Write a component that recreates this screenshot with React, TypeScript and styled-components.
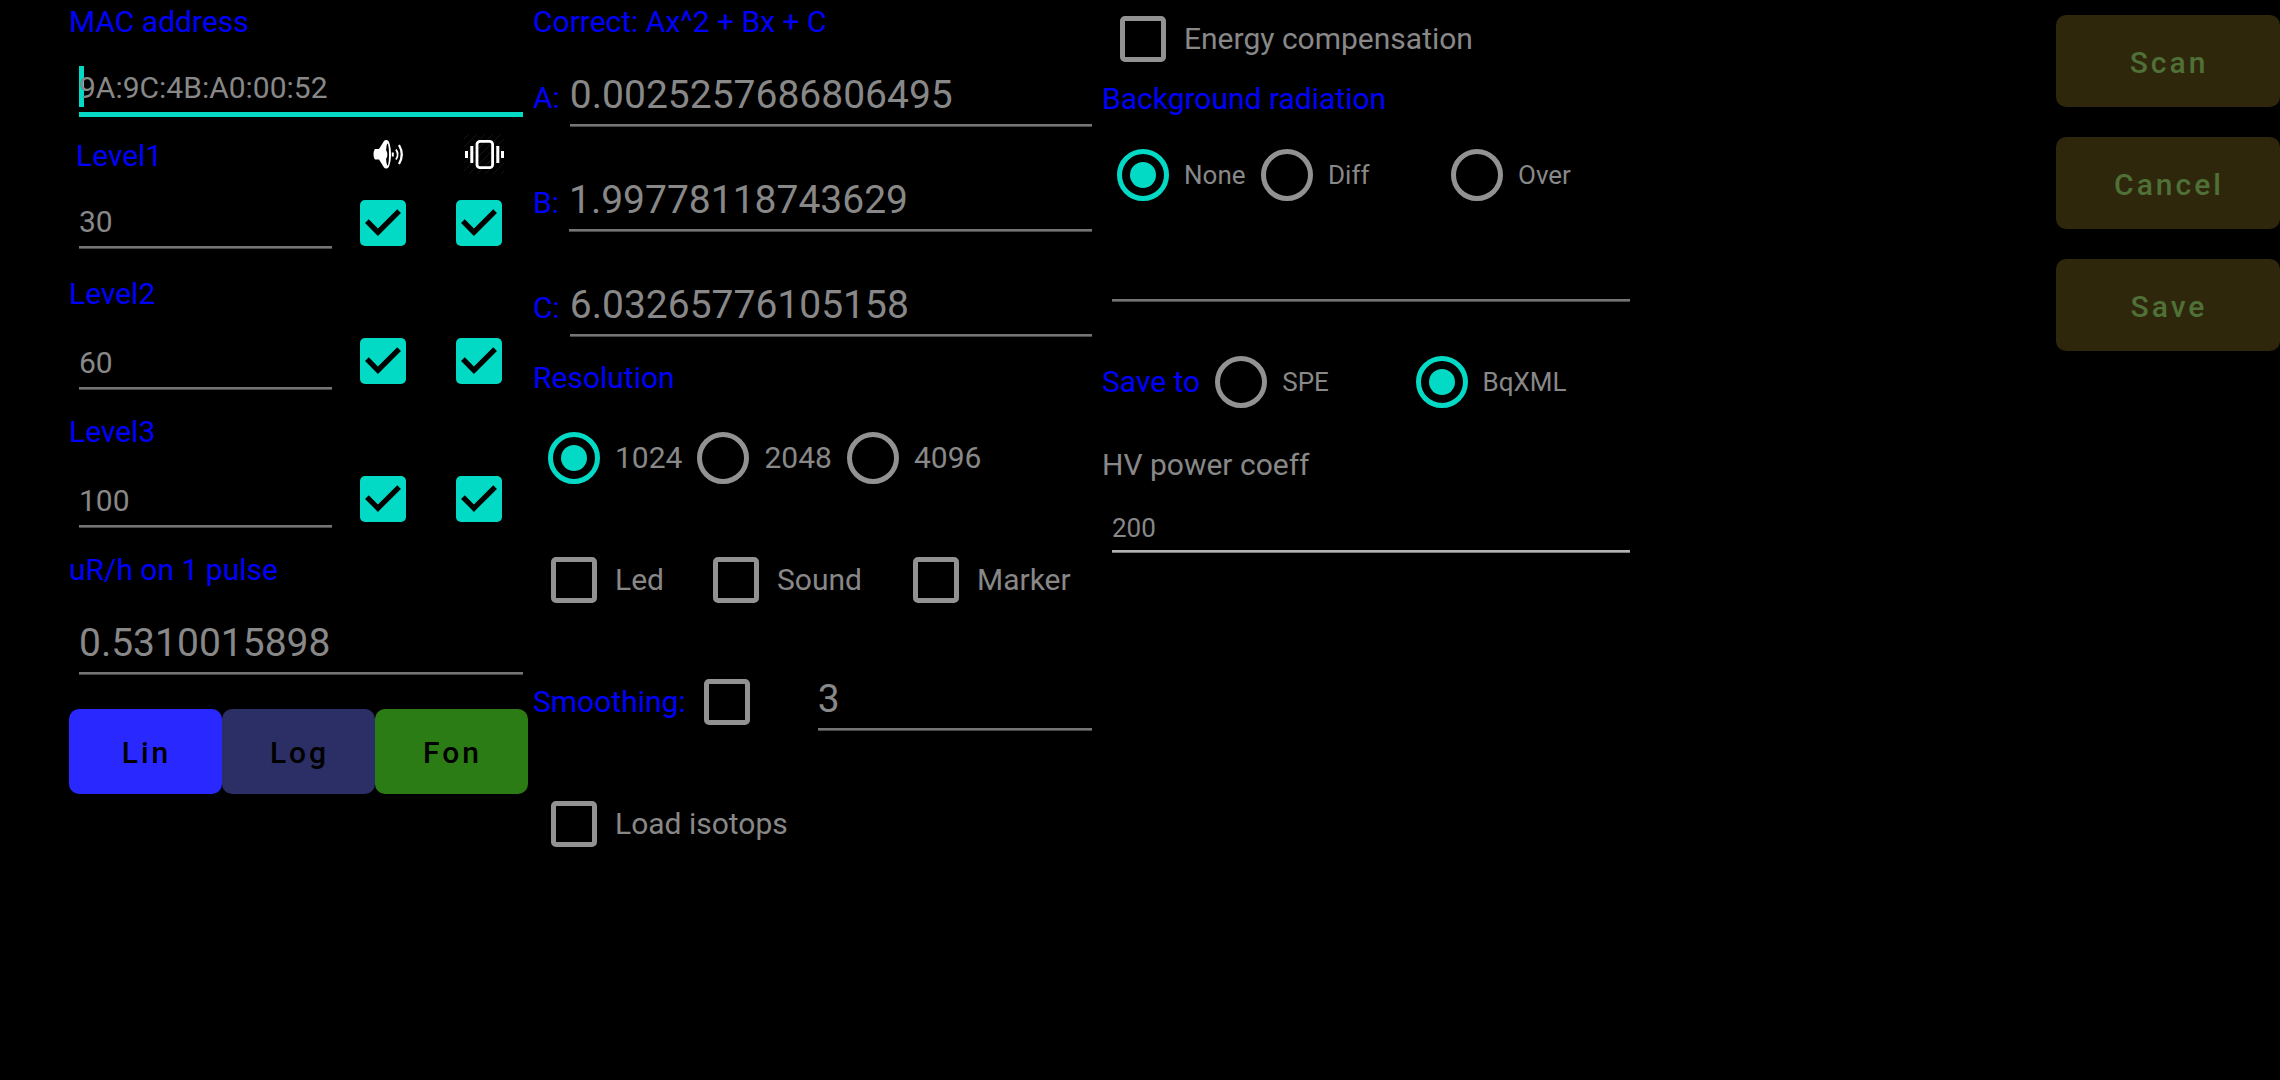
import React from "react";
import styled, { createGlobalStyle, css } from "styled-components";

const accent = "#03dac5";
const blue = "#0000ff";
const grey = "#888888";

const GlobalStyle = createGlobalStyle`
  * { box-sizing: border-box; }
  body {
    margin: 0;
    background: #000;
    color: ${grey};
    font-family: Roboto, sans-serif;
    font-size: 30px;
  }
`;

const Screen = styled.main`
  display: grid;
  grid-template-columns: 464fr 569fr 538fr 640fr;
  align-items: start;
  min-height: 100vh;
  padding-left: 69px;
  overflow: hidden;
`;

const Column = styled.section`
  display: flex;
  flex-direction: column;
  min-width: 0;
`;

const captionStyle = css<{ $plain?: boolean }>`
  padding-top: 3px;
  line-height: 38px;
  color: ${(p) => (p.$plain ? grey : blue)};
  white-space: nowrap;
`;

const Caption = styled.label<{ $plain?: boolean }>`
  ${captionStyle}
`;

const Heading = styled.div`
  ${captionStyle}
`;

const fieldSizes = {
  small: { font: 26, line: 44 },
  medium: { font: 30, line: 50 },
  large: { font: 39, line: 58 },
};

const Field = styled.input<{
  $size: keyof typeof fieldSizes;
  $top: number;
  $active?: boolean;
  $bright?: boolean;
}>`
  flex: 1;
  min-width: 0;
  margin: 0 10px;
  padding: ${(p) => p.$top}px 0 0;
  border: 0;
  border-bottom: ${(p) => (p.$active ? 5 : 2)}px solid
    ${(p) => (p.$active ? accent : p.$bright ? "#b4b4b4" : "#757575")};
  box-shadow: ${(p) =>
    p.$active ? "none" : p.$bright ? "0 1px #7c7c7c" : "0 1px #484848"};
  border-radius: 0;
  outline: none;
  background: ${(p) =>
    p.$active
      ? `linear-gradient(${accent}, ${accent}) 0 25px / 5px 41px no-repeat`
      : "transparent"};
  color: ${grey};
  caret-color: ${accent};
  font-family: inherit;
  font-size: ${(p) => fieldSizes[p.$size].font}px;
  line-height: ${(p) => fieldSizes[p.$size].line}px;
  height: ${(p) =>
    p.$top + fieldSizes[p.$size].line + (p.$active ? 5 : 2)}px;
`;

const FieldRow = styled.div<{ $height: number }>`
  display: flex;
  align-items: baseline;
  min-height: ${(p) => p.$height}px;
`;

const LevelGrid = styled.div`
  display: grid;
  grid-template-columns: 273fr 96fr 95fr;
`;

const LevelHead = styled(LevelGrid)`
  ${Caption} {
    padding-left: 7px;
  }
  svg {
    display: block;
    width: 40px;
    height: 40px;
    margin-left: 26px;
  }
`;

const LevelRow = styled(LevelGrid)`
  align-items: start;
  height: 97px;
`;

const TickCell = styled.div`
  display: flex;
  align-items: center;
  height: 96px;
`;

const Tick = styled.input.attrs({ type: "checkbox" })`
  appearance: none;
  flex: none;
  width: 46px;
  height: 46px;
  margin: 0 18px;
  border: 5px solid #929292;
  border-radius: 5px;

  &:checked {
    border: 0;
    background: ${accent};
  }
  &:checked::after {
    content: "";
    display: block;
    height: 100%;
    background: #000;
    clip-path: polygon(11% 50%, 19% 42%, 39% 62%, 81% 20%, 89% 28%, 39% 78%);
  }
`;

const Radio = styled.input.attrs({ type: "radio" })`
  appearance: none;
  display: grid;
  place-items: center;
  flex: none;
  width: 52px;
  height: 52px;
  margin: 0 15px;
  border: 5px solid #929292;
  border-radius: 50%;

  &:checked {
    border-color: ${accent};
  }
  &:checked::after {
    content: "";
    width: 26px;
    height: 26px;
    border-radius: 50%;
    background: ${accent};
  }
`;

const Choice = styled.label<{ $small?: boolean }>`
  display: flex;
  align-items: center;
  font-size: ${(p) => (p.$small ? 26 : 30)}px;
  line-height: 38px;
  white-space: nowrap;
`;

const Row = styled.div<{ $height: number; $columns?: string }>`
  display: ${(p) => (p.$columns ? "grid" : "flex")};
  grid-template-columns: ${(p) => p.$columns};
  align-items: center;
  height: ${(p) => p.$height}px;

  > ${Caption}, > ${Heading} {
    padding-bottom: 3px;
  }
`;

const SmoothingField = styled.div`
  display: flex;
  align-self: start;
  min-width: 0;
`;

const ModeBar = styled.div`
  display: grid;
  grid-template-columns: repeat(3, 1fr);
  padding: 15px 5px 15px 0;
`;

const Button = styled.button<{ $bg: string; $fg?: string; $tall?: boolean }>`
  height: ${(p) => (p.$tall ? 92 : 85)}px;
  padding: 2px 0 0 2px;
  border: 0;
  border-radius: 10px;
  background: ${(p) => p.$bg};
  color: ${(p) => p.$fg ?? "#000"};
  font-family: inherit;
  font-size: 30px;
  font-weight: 500;
  letter-spacing: 3px;
`;

const Actions = styled.nav`
  display: flex;
  flex-direction: column;
  justify-self: end;
  gap: 30px;
  width: 224px;
  padding-top: 15px;
`;

const SpeakerIcon = () => (
  <svg viewBox="0 0 40 40" fill="none" aria-hidden="true">
    <path
      d="M7 15h4l5-8c1-1.500 4-1.500 5 1 1.500 4 2 8 2 12.500s-.5 8-2 12c-1 2.500-4 2.500-5 1l-5-8H7c-2-2-2-8.500 0-10.500z"
      fill="#fff"
    />
    <ellipse cx="19.500" cy="20.500" rx="1.500" ry="11" fill="#000" />
    <path d="M17.500 16c2.500 1 2.500 8 0 9z" fill="#fff" />
    <path d="M24.800 18.500v4" stroke="#fff" strokeWidth="2" />
    <path d="M28 15.500c2 3 2 7 0 10" stroke="#fff" strokeWidth="1.800" />
    <path d="M31 11c3.500 6 3.500 13 0 19" stroke="#fff" strokeWidth="2.200" />
  </svg>
);

const VibrateIcon = () => (
  <svg viewBox="0 0 40 40" fill="none" aria-hidden="true">
    <path
      d="M0 5 5 0M0 13 13 0M0 21 21 0M0 29 29 0M0 37 37 0M5 40 40 5M13 40 40 13M21 40 40 21M29 40 40 29M37 40 40 37"
      stroke="#141414"
    />
    <rect x="13" y="7.300" width="15.600" height="26.400" rx="3" stroke="#fff" strokeWidth="2.800" />
    <path d="M7.800 12v17M33.800 12v17" stroke="#fff" strokeWidth="3" />
    <path d="M2.500 17v7M38.500 17v7" stroke="#fff" strokeWidth="3" />
  </svg>
);

const levels = [
  { id: 1, value: "30", top: 21 },
  { id: 2, value: "60", top: 24 },
  { id: 3, value: "100", top: 24 },
];

const coefficients = [
  { name: "A", value: "0.0025257686806495" },
  { name: "B", value: "1.99778118743629" },
  { name: "C", value: "6.03265776105158" },
];

export default function App() {
  return (
    <>
      <GlobalStyle />
      <Screen>
        <Column>
          <Caption htmlFor="mac">MAC address</Caption>
          <FieldRow $height={93}>
            <Field id="mac" $size="medium" $top={21} $active defaultValue="9A:9C:4B:A0:00:52" />
          </FieldRow>
          {levels.map((level) => (
            <React.Fragment key={level.id}>
              {level.id === 1 ? (
                <LevelHead>
                  <Caption htmlFor="level1">Level1</Caption>
                  <SpeakerIcon />
                  <VibrateIcon />
                </LevelHead>
              ) : (
                <Caption htmlFor={`level${level.id}`}>Level{level.id}</Caption>
              )}
              <LevelRow>
                <Field
                  id={`level${level.id}`}
                  $size="medium"
                  $top={level.top}
                  defaultValue={level.value}
                />
                <TickCell>
                  <Tick aria-label={`Level${level.id} sound`} defaultChecked />
                </TickCell>
                <TickCell>
                  <Tick aria-label={`Level${level.id} vibration`} defaultChecked />
                </TickCell>
              </LevelRow>
            </React.Fragment>
          ))}
          <Caption htmlFor="pulse">uR/h on 1 pulse</Caption>
          <FieldRow $height={105}>
            <Field id="pulse" $size="large" $top={25} defaultValue="0.5310015898" />
          </FieldRow>
          <ModeBar>
            <Button $bg="#2929ff">Lin</Button>
            <Button $bg="#2b2f66">Log</Button>
            <Button $bg="#2c7c15">Fon</Button>
          </ModeBar>
        </Column>

        <Column>
          <Heading>Correct: Ax^2 + Bx + C</Heading>
          {coefficients.map((c) => (
            <FieldRow key={c.name} $height={105}>
              <Caption htmlFor={`coef${c.name}`}>{c.name}:</Caption>
              <Field id={`coef${c.name}`} $size="large" $top={25} defaultValue={c.value} />
            </FieldRow>
          ))}
          <Heading>Resolution</Heading>
          <Row $height={122}>
            {["1024", "2048", "4096"].map((r) => (
              <Choice key={r}>
                <Radio name="resolution" defaultChecked={r === "1024"} />
                {r}
              </Choice>
            ))}
          </Row>
          <Row $height={122} $columns="162fr 200fr 207fr">
            {["Led", "Sound", "Marker"].map((name) => (
              <Choice key={name}>
                <Tick />
                {name}
              </Choice>
            ))}
          </Row>
          <Row $height={122} $columns="auto 122fr 294fr">
            <Caption htmlFor="smoothing">Smoothing:</Caption>
            <Tick id="smoothing" />
            <SmoothingField>
              <Field $size="large" $top={29} aria-label="Smoothing window" defaultValue="3" />
            </SmoothingField>
          </Row>
          <Row $height={122}>
            <Choice>
              <Tick />
              Load isotops
            </Choice>
          </Row>
        </Column>

        <Column>
          <Row $height={77}>
            <Choice>
              <Tick />
              Energy compensation
            </Choice>
          </Row>
          <Heading>Background radiation</Heading>
          <Row $height={114} $columns="144fr 190fr 204fr">
            {["None", "Diff", "Over"].map((name) => (
              <Choice key={name} $small>
                <Radio name="background" defaultChecked={name === "None"} />
                {name}
              </Choice>
            ))}
          </Row>
          <FieldRow $height={89}>
            <Field $size="small" $top={23} aria-label="Background file" />
          </FieldRow>
          <Row $height={122} $columns="auto 200fr 239fr">
            <Heading>Save to</Heading>
            <Choice $small>
              <Radio name="format" />
              SPE
            </Choice>
            <Choice $small>
              <Radio name="format" defaultChecked />
              BqXML
            </Choice>
          </Row>
          <Caption htmlFor="hv" $plain>
            HV power coeff
          </Caption>
          <FieldRow $height={89}>
            <Field id="hv" $size="small" $top={22} $bright defaultValue="200" />
          </FieldRow>
        </Column>

        <Actions>
          {["Scan", "Cancel", "Save"].map((name) => (
            <Button key={name} $tall $bg="#2e270c" $fg="#4f7036">
              {name}
            </Button>
          ))}
        </Actions>
      </Screen>
    </>
  );
}
